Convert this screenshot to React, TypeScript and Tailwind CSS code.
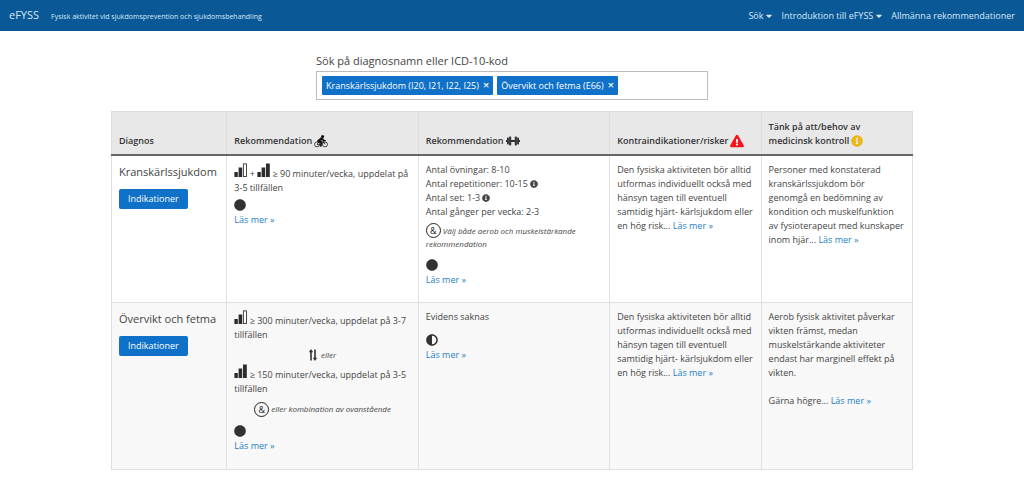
import { useState } from 'react';
import type { ReactNode } from 'react';
import {
  FaAdjust,
  FaCaretDown,
  FaCircle,
  FaExclamationTriangle,
  FaInfoCircle,
} from 'react-icons/fa';

interface Diagnosis {
  id: string;
  name: string;
  tag: string;
}

const diagnoses: Diagnosis[] = [
  { id: 'krans', name: 'Kranskärlssjukdom', tag: 'Kranskärlssjukdom (I20, I21, I22, I25)' },
  { id: 'fetma', name: 'Övervikt och fetma', tag: 'Övervikt och fetma (E66)' },
];

const navItems = [
  { label: 'Sök', menu: true },
  { label: 'Introduktion till eFYSS', menu: true },
  { label: 'Allmänna rekommendationer', menu: false },
];

// Intensity bars, the last one is only outlined for moderate intensity
function Bars({ high = false }: { high?: boolean }) {
  return (
    <svg
      viewBox="0 0 13 14"
      className="inline-block h-[14px] w-[13px] align-baseline"
      fill="#2c2c2c"
      role="img"
      aria-label={high ? 'Hög intensitet' : 'Måttlig intensitet'}
    >
      <rect x="0.4" y="9" width="3.4" height="5" />
      <rect x="4.6" y="4.5" width="3.6" height="9.5" />
      {high ? (
        <rect x="9" y="0.5" width="3.8" height="13.5" />
      ) : (
        <rect x="9.4" y="0.9" width="3.1" height="12.6" fill="#fff" stroke="#333" strokeWidth="0.9" />
      )}
    </svg>
  );
}

function Cyclist() {
  return (
    <svg viewBox="0 0 14 13" className="inline-block h-[13px] w-[14px]" aria-hidden="true">
      <g fill="none" stroke="#222" strokeWidth="0.8">
        <circle cx="3" cy="9.4" r="2.5" />
        <circle cx="11" cy="9.4" r="2.5" />
        <path d="M3 9.4 5 6.8h4.3L7 9.6H3M9 5.2l2 4.2" />
      </g>
      <circle cx="8.6" cy="1.5" r="1.5" fill="#111" />
      <path d="M7.4 2.2 3.6 5.4q-.7.7 0 1.3L6.4 8 6 11.3h1.5L8.2 7.3 6.5 6l1.6-1.3 1 1.4h2.3V5H9.8L8.8 3z" fill="#111" stroke="#111" strokeWidth="0.5" />
    </svg>
  );
}

function Dumbbell() {
  return (
    <svg viewBox="0 0 14 10" className="inline-block h-[10px] w-[14px]" fill="#333" aria-hidden="true">
      <rect x="0" y="4" width="1.5" height="2" />
      <rect x="1" y="1.6" width="1.9" height="6.8" rx="0.6" />
      <rect x="3.1" y="0.6" width="2.1" height="8.8" rx="0.7" />
      <rect x="5" y="4" width="4" height="2" />
      <rect x="8.8" y="0.6" width="2.1" height="8.8" rx="0.7" />
      <rect x="11.1" y="1.6" width="1.9" height="6.8" rx="0.6" />
      <rect x="12.5" y="4" width="1.5" height="2" />
    </svg>
  );
}

function UpDown() {
  return (
    <svg viewBox="0 0 8 12" className="inline-block h-[12px] w-[8px]" fill="#333" aria-hidden="true">
      <path d="M2 0 4.2 3.2H2.8V11.5H1.2V3.2H-.2zM6 12 3.8 8.8H5.2V.5H6.8V8.8H8.2z" />
    </svg>
  );
}

function Ampersand() {
  return (
    <span className="inline-flex size-[15px] items-center justify-center rounded-full border border-[#222] text-[9px] leading-none text-[#222] not-italic">
      &amp;
    </span>
  );
}

function ReadMore() {
  return (
    <a href="#las-mer" className="whitespace-nowrap text-[#1f7fc8] hover:underline">
      Läs mer »
    </a>
  );
}

function Evidence({ children }: { children: ReactNode }) {
  return (
    <div>
      <div className="flex h-4 items-center text-[12px] text-[#333]">{children}</div>
      <ReadMore />
    </div>
  );
}

function NameCell({ name }: { name: string }) {
  return (
    <th scope="row" className="border border-[#e0e0e0] p-[7px] text-left font-normal">
      <div className="text-[11px] leading-[18px] whitespace-nowrap">{name}</div>
      <button
        type="button"
        className="mt-2 h-5 rounded-[2px] bg-[#0f71c8] px-[9px] text-[9px] text-white hover:bg-[#0b5896]"
      >
        Indikationer
      </button>
    </th>
  );
}

const cell = 'border border-[#e0e0e0] p-[7px]';
const headCell =
  'border border-b-2 border-[#dcdcdc] border-b-[#666] px-[7px] pt-2 pb-[6px] font-semibold';

function Navbar() {
  return (
    <header className="flex h-[31px] items-center justify-between bg-[#0b5896] px-[9px] text-[#d5e8f8]">
      <div className="flex items-center gap-3">
        <a href="#start" className="text-[11px]">
          eFYSS
        </a>
        <span className="pt-[3px] text-[7px]">
          Fysisk aktivitet vid sjukdomsprevention och sjukdomsbehandling
        </span>
      </div>
      <nav className="flex items-center gap-[9px] text-[9px]">
        {navItems.map((item) =>
          item.menu ? (
            <button key={item.label} type="button" className="flex items-center gap-[3px]">
              {item.label}
              <FaCaretDown className="h-[10px] w-[6px]" />
            </button>
          ) : (
            <a key={item.label} href="#rekommendationer">
              {item.label}
            </a>
          )
        )}
      </nav>
    </header>
  );
}

function SearchField() {
  const [tags, setTags] = useState(diagnoses);

  return (
    <div className="mx-auto w-full max-w-[392px]">
      <label htmlFor="diagnos" className="block text-[11px] leading-[18px]">
        Sök på diagnosnamn eller ICD-10-kod
      </label>
      <div className="mt-[1px] flex min-h-[29px] items-center gap-1 border border-[#bbb] px-[5px]">
        {tags.map((tag) => (
          <span
            key={tag.id}
            className="flex h-[19px] shrink-0 items-center gap-1 rounded-[1px] bg-[#0f71c8] px-1 text-[9px] text-white"
          >
            {tag.tag}
            <button
              type="button"
              aria-label={`Ta bort ${tag.name}`}
              className="text-[11px] font-semibold"
              onClick={() => setTags(tags.filter((t) => t.id !== tag.id))}
            >
              ×
            </button>
          </span>
        ))}
        <input id="diagnos" type="text" className="min-w-0 flex-1 text-[9px] outline-none" />
      </div>
    </div>
  );
}

function ResultTable() {
  return (
    <table className="mt-[11px] w-full table-fixed border-collapse text-left align-top text-[9px] leading-[14px]">
      <colgroup>
        <col className="w-[14.4%]" />
        <col className="w-[23.9%]" />
        <col className="w-[23.9%]" />
        <col className="w-[18.9%]" />
        <col />
      </colgroup>
      <thead className="bg-[#e8e8e8] align-bottom text-[#333]">
        <tr>
          <th scope="col" className={headCell}>
            Diagnos
          </th>
          <th scope="col" className={headCell}>
            <span className="flex items-center gap-[2px]">
              Rekommendation <Cyclist />
            </span>
          </th>
          <th scope="col" className={headCell}>
            <span className="flex items-center gap-[2px]">
              Rekommendation <Dumbbell />
            </span>
          </th>
          <th scope="col" className={headCell}>
            <span className="flex items-center gap-[2px]">
              Kontraindikationer/risker <FaExclamationTriangle className="size-[14px] text-[#f5141b]" />
            </span>
          </th>
          <th scope="col" className={headCell}>
            Tänk på att/behov av
            <span className="flex items-center gap-[2px]">
              medicinsk kontroll <FaInfoCircle className="size-3 text-[#eab71c]" />
            </span>
          </th>
        </tr>
      </thead>
      <tbody className="align-top">
        <tr className="h-[147px]">
          <NameCell name="Kranskärlssjukdom" />
          <td className={cell}>
            <p>
              <Bars /> + <Bars high /> ≥ 90 minuter/vecka, uppdelat på 3-5 tillfällen
            </p>
            <div className="mt-[2px]">
              <Evidence>
                <FaCircle />
              </Evidence>
            </div>
          </td>
          <td className={cell}>
            <p>Antal övningar: 8-10</p>
            <p className="flex items-center gap-[2px]">
              Antal repetitioner: 10-15 <FaInfoCircle className="size-2" />
            </p>
            <p className="flex items-center gap-[2px]">
              Antal set: 1-3 <FaInfoCircle className="size-2" />
            </p>
            <p>Antal gånger per vecka: 2-3</p>
            <p className="mt-1 text-[8px] leading-[11px] italic">
              <Ampersand /> Välj både aerob och muskelstärkande rekommendation
            </p>
            <div className="mt-2">
              <Evidence>
                <FaCircle />
              </Evidence>
            </div>
          </td>
          <td className={cell}>
            Den fysiska aktiviteten bör alltid utformas individuellt också med hänsyn tagen till
            eventuell samtidig hjärt- kärlsjukdom eller en hög risk... <ReadMore />
          </td>
          <td className={cell}>
            Personer med konstaterad kranskärlssjukdom bör genomgå en bedömning av kondition och
            muskelfunktion av fysioterapeut med kunskaper inom hjär... <ReadMore />
          </td>
        </tr>
        <tr className="h-[167px] bg-[#f8f8f8]">
          <NameCell name="Övervikt och fetma" />
          <td className={cell}>
            <p>
              <Bars /> ≥ 300 minuter/vecka, uppdelat på 3-7 tillfällen
            </p>
            <p className="mt-[6px] mb-[2px] flex items-center justify-center gap-1 text-[8px] leading-[14px] italic">
              <UpDown /> eller
            </p>
            <p>
              <Bars high /> ≥ 150 minuter/vecka, uppdelat på 3-5 tillfällen
            </p>
            <p className="mt-[6px] flex items-center justify-center gap-[2px] text-[8px] leading-[14px] italic">
              <Ampersand /> eller kombination av ovanstående
            </p>
            <div className="mt-[6px]">
              <Evidence>
                <FaCircle />
              </Evidence>
            </div>
          </td>
          <td className={cell}>
            <p>Evidens saknas</p>
            <div className="mt-2">
              <Evidence>
                <FaAdjust />
              </Evidence>
            </div>
          </td>
          <td className={cell}>
            Den fysiska aktiviteten bör alltid utformas individuellt också med hänsyn tagen till
            eventuell samtidig hjärt- kärlsjukdom eller en hög risk... <ReadMore />
          </td>
          <td className={cell}>
            <p>
              Aerob fysisk aktivitet påverkar vikten främst, medan muskelstärkande aktiviteter endast
              har marginell effekt på vikten.
            </p>
            <p className="mt-[14px]">
              Gärna högre... <ReadMore />
            </p>
          </td>
        </tr>
      </tbody>
    </table>
  );
}

export default function App() {
  return (
    <div className="bg-white font-['Open_Sans','Noto_Sans',sans-serif] text-[#444]">
      <Navbar />
      <main className="mx-auto w-full max-w-[802px] pt-[21px]">
        <SearchField />
        <ResultTable />
      </main>
    </div>
  );
}
